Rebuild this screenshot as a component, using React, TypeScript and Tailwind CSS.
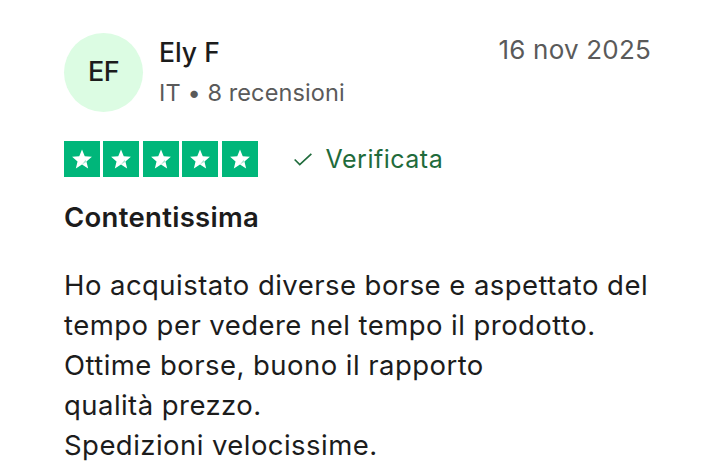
import React from "react";

function Star() {
  return (
    <div className="flex h-[36px] w-[36px] items-center justify-center bg-[#00b67a]">
      <svg viewBox="0 0 24 24" className="h-[24px] w-[24px]">
        <path
          d="M12 2.6l2.75 6.65 7.15.55-5.45 4.65 1.7 6.95L12 17.6l-6.15 3.8 1.7-6.95L2.1 9.8l7.15-.55z"
          fill="#ffffff"
        />
        <path d="M12 17.6l4.2-2.6-.55-2.3z" fill="#00b67a" opacity="0.35" />
      </svg>
    </div>
  );
}

export default function App() {
  return (
    <div
      className="min-h-screen w-[710px] bg-white pl-[64px] pr-[59px] pt-[33px] text-[#1c1c1c]"
      style={{ fontFamily: "Inter, 'Noto Sans', sans-serif" }}
    >
      <div className="flex items-start">
        <div className="flex h-[79px] w-[79px] shrink-0 items-center justify-center rounded-full bg-[#dcfce3] text-[27px] font-medium tracking-[-0.5px] text-[#1c1c1c]">
          EF
        </div>
        <div className="ml-[16px] flex flex-col">
          <div className="mt-[1px] text-[26.5px] font-medium leading-[36px]">
            Ely F
          </div>
          <div className="mt-[8px] text-[23.5px] leading-[30px] tracking-[0.1px] text-[#5a5a5a]">
            IT • 8 recensioni
          </div>
        </div>
        <div className="ml-auto mt-[-1px] text-[26px] leading-[36px] tracking-[0.2px] text-[#5a5a5a]">
          16 nov 2025
        </div>
      </div>

      <div className="mt-[29px] flex items-center">
        <div className="flex gap-[3.4px]">
          <Star />
          <Star />
          <Star />
          <Star />
          <Star />
        </div>
        <div className="ml-[35px] flex items-center gap-[13px] text-[#1f6b3b]">
          <svg viewBox="0 0 20 14" className="h-[13px] w-[20px]" fill="none">
            <path d="M1 7l5.5 5.5L19 1" stroke="#1f6b3b" strokeWidth="1.8" />
          </svg>
          <span className="text-[25px] leading-[30px] tracking-[0.5px]">Verificata</span>
        </div>
      </div>

      <div className="mt-[22px] text-[27.5px] font-semibold leading-[36px] tracking-[0.3px]">
        Contentissima
      </div>

      <p className="mt-[30px] whitespace-nowrap text-[27.5px] leading-[40px] tracking-[0.45px]">
        Ho acquistato diverse borse e aspettato del
        <br />
        tempo per vedere nel tempo il prodotto.
        <br />
        Ottime borse, buono il rapporto
        <br />
        qualità prezzo.
        <br />
        Spedizioni velocissime.
      </p>
    </div>
  );
}
